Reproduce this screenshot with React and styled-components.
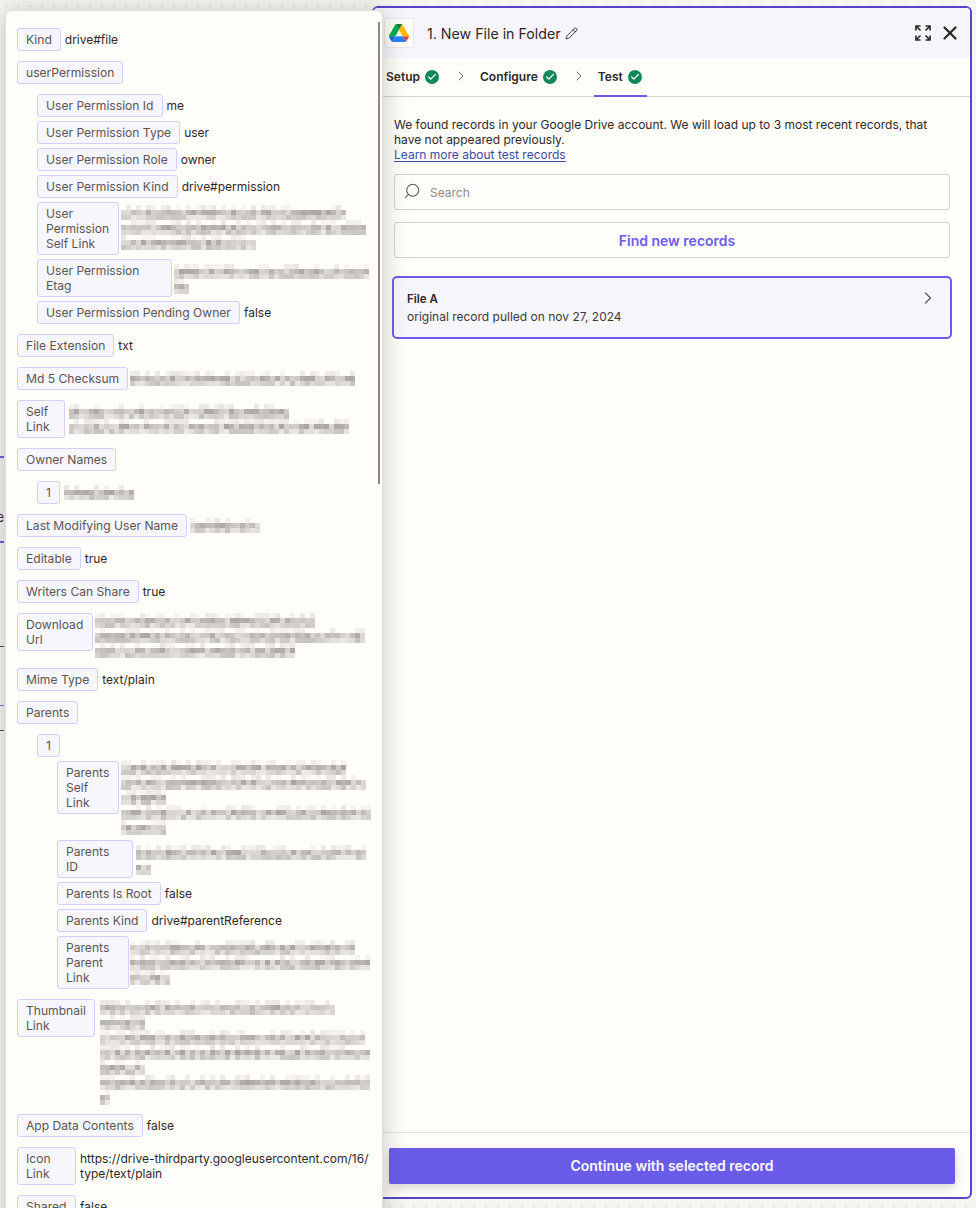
import React from "react";
import styled, { createGlobalStyle } from "styled-components";
import { Check, ChevronRight, Pencil, Search, X } from "lucide-react";

const GlobalStyle = createGlobalStyle`
  html, body {
    margin: 0;
    padding: 0;
    height: 1208px;
    overflow: hidden;
  }
  body {
    font-family: Inter, "Liberation Sans", sans-serif;
    font-size: 12px;
    line-height: 15px;
    color: #2d2926;
  }
  * {
    box-sizing: border-box;
  }
`;

const Page = styled.div`
  position: relative;
  width: 976px;
  height: 1208px;
  padding: 6px 4px 9px 372px;
  overflow: hidden;
  background-color: #f7f5f1;
  background-image: radial-gradient(#e4e1da 1px, transparent 1px);
  background-size: 12px 12px;
`;

/* ---------- zap canvas peeking out behind the popover ---------- */

const CanvasNode = styled.div`
  position: absolute;
  top: 456px;
  left: -40px;
  width: 44px;
  height: 87px;
  padding: 52px 0 0;
  text-align: right;
  font-size: 13px;
  line-height: 15px;
  background: #f3f2f8;
  border-top: 2px solid #6a5ce8;
  border-bottom: 2px solid #6a5ce8;
`;

const CanvasSpeck = styled.span`
  position: absolute;
  top: ${(p) => p.$top}px;
  left: 0;
  width: 4px;
  height: 1px;
  background: ${(p) => p.$color};
`;

/* ---------- right panel ---------- */

const Panel = styled.section`
  display: flex;
  flex-direction: column;
  height: 100%;
  background: #fffdf9;
  border: 2px solid #5445c9;
  border-radius: 6px;
  overflow: hidden;
`;

const Header = styled.header`
  display: flex;
  align-items: center;
  flex: none;
  height: 50px;
  padding: 0 9px 0 10px;
  background: #f6f5fc;
`;

const AppIcon = styled.div`
  display: flex;
  align-items: center;
  justify-content: center;
  flex: none;
  width: 30px;
  height: 30px;
  background: #fffdf9;
  border: 1px solid #ebe8e2;
  border-radius: 3px;
`;

const Title = styled.h1`
  margin: 1px 0 0 13px;
  font-size: 14.2px;
  line-height: 20px;
  font-weight: 400;
  color: #2d2926;
`;

const EditIcon = styled(Pencil)`
  margin-left: 4px;
  color: #2d2926;
`;

const HeaderActions = styled.div`
  display: flex;
  align-items: center;
  gap: 8px;
  margin-left: auto;
  color: #2d2926;
`;

const Tabs = styled.nav`
  display: flex;
  align-items: stretch;
  flex: none;
  height: 39px;
  padding: 0 12px;
  border-bottom: 1px solid #d8d5ce;
`;

const Tab = styled.div`
  display: flex;
  align-items: center;
  gap: 5px;
  margin-bottom: -1px;
  padding: 0 ${(p) => (p.$active ? "5px" : "0")} 0 ${(p) => (p.$active ? "4px" : "0")};
  font-size: 12px;
  font-weight: 600;
  color: #2d2926;
  border-bottom: 2px solid ${(p) => (p.$active ? "#6a5ce8" : "transparent")};
`;

const TabCheck = styled.span`
  display: flex;
  align-items: center;
  justify-content: center;
  width: 14px;
  height: 14px;
  border-radius: 50%;
  background: #12875a;
  color: #fffdf9;
`;

const TabArrow = styled(ChevronRight)`
  align-self: center;
  margin: -3px ${(p) => p.$after}px 0 ${(p) => p.$before}px;
  color: #6e6864;
`;

const Body = styled.div`
  display: flex;
  flex-direction: column;
  flex: 1;
  min-height: 0;
  padding: 20px 20px 0 20px;
`;

const Intro = styled.p`
  margin: 0;
  font-size: 12px;
  line-height: 15.2px;
  color: #2d2926;
`;

const TestLink = styled.a`
  color: #3a4aa8;
  text-decoration: underline;
  text-underline-offset: 2px;
`;

const SearchBox = styled.div`
  display: flex;
  align-items: center;
  gap: 9px;
  height: 36px;
  margin-top: 11px;
  padding: 1px 8px 0;
  border: 1px solid #d6d3cd;
  border-radius: 3px;
  color: #8f8a85;
  font-size: 12px;
`;

const SearchIcon = styled(Search)`
  margin-top: -2px;
  color: #5e5955;
  transform: scaleX(-1);
`;

const FindButton = styled.button`
  height: 36px;
  margin-top: 12px;
  padding: 2px 0 0 10px;
  background: transparent;
  border: 1px solid #d6d3cd;
  border-radius: 3px;
  color: #6a5ce8;
  font: 600 14px/15px Inter, "Liberation Sans", sans-serif;
`;

const RecordCard = styled.div`
  display: flex;
  align-items: center;
  justify-content: space-between;
  height: 63px;
  margin: 18px -2px 0;
  padding: 1px 12px 0 13px;
  background: #f7f6fd;
  border: 2px solid #6a5ce8;
  border-radius: 5px;
`;

const RecordName = styled.div`
  font-size: 11.5px;
  line-height: 18px;
  font-weight: 600;
`;

const RecordMeta = styled.div`
  font-size: 12px;
  line-height: 18px;
  color: #3d3835;
`;

const RecordArrow = styled(ChevronRight)`
  margin-bottom: 19px;
  color: #5e5955;
`;

const Footer = styled.footer`
  flex: none;
  height: 65px;
  padding: 15px 15px 0;
  border-top: 1px solid #e8e5df;
`;

const ContinueButton = styled.button`
  width: 100%;
  height: 36px;
  padding: 0 0 2px;
  background: #6a5ce8;
  border: none;
  border-radius: 2px;
  color: #fbfaff;
  font: 600 14px/15px Inter, "Liberation Sans", sans-serif;
  box-shadow: 0 4px 10px rgba(60, 55, 50, 0.18);
`;

/* ---------- floating data popover ---------- */

const Popover = styled.aside`
  position: absolute;
  top: 10px;
  left: 5px;
  width: 378px;
  height: 1240px;
  padding: 17px 12px 0 11px;
  background: #fffdf9;
  border: 1px solid #e2dfd8;
  border-radius: 6px;
  box-shadow: 0 2px 24px rgba(70, 65, 60, 0.3);
`;

const ScrollThumb = styled.div`
  position: absolute;
  top: 11px;
  right: 2px;
  width: 2px;
  height: 462px;
  background: #8d8884;
`;

const Tree = styled.div`
  display: flex;
  flex-direction: column;
  gap: ${(p) => (p.$nested ? "4px" : "10px")};
  margin-left: ${(p) => (p.$nested ? "20px" : "0")};
`;

const Group = styled.div`
  display: flex;
  flex-direction: column;
  gap: ${(p) => p.$gap || "10px"};
`;

const Row = styled.div`
  display: flex;
  align-items: flex-start;
  gap: 4px;
`;

const Key = styled.span`
  flex: none;
  width: ${(p) => p.$w || "auto"};
  padding: 3px 8px;
  font-size: 12.1px;
  line-height: 15px;
  color: #5b5552;
  background: #f7f6fd;
  border: 1px solid #d2d0fa;
  border-radius: 3px;
`;

const Value = styled.span`
  min-width: 0;
  padding: 4px 0;
  font-size: 12px;
  line-height: 15px;
  color: #2d2926;
  white-space: nowrap;
`;

const Mosaic = styled.svg`
  display: block;
  flex: none;
  margin-top: ${(p) => p.$top || 0}px;
  margin-left: ${(p) => p.$left || 0}px;
  margin-bottom: ${(p) => -(p.$top || 0)}px;
`;

// pixelated redaction: one entry per line of hidden text, width in px
function Redacted({ lines, seed = 7, top, left }) {
  const cell = 5;
  let n = seed * 9301 + 49297;
  const next = () => {
    n = (n * 9301 + 49297) % 233280;
    return n / 233280;
  };
  const width = Math.max(...lines);
  const cells = [];
  lines.forEach((w, li) => {
    const count = Math.round(w / cell);
    for (let i = 0; i < count; i++) {
      if (next() > 0.45) cells.push([i, li * 3, 232 + next() * 16]);
      cells.push([i, li * 3 + 1, 168 + next() * 55]);
      cells.push([i, li * 3 + 2, 195 + next() * 40]);
    }
  });
  return (
    <Mosaic $top={top} $left={left} width={width} height={lines.length * 15} shapeRendering="crispEdges">
      {cells.map(([x, y, g], i) => {
        const c = Math.round(g);
        return (
          <rect key={i} x={x * cell} y={y * cell} width={cell} height={cell} fill={`rgb(${c},${c - 3},${c - 6})`} />
        );
      })}
    </Mosaic>
  );
}

const DriveLogo = () => (
  <svg width="20" height="18" viewBox="0 0 87.3 78">
    <path d="M6.6 66.85l3.85 6.65c.8 1.4 1.95 2.5 3.3 3.3L27.5 53H0c0 1.55.4 3.1 1.2 4.5z" fill="#0066da" />
    <path d="M43.65 25L29.9 1.2c-1.35.8-2.5 1.9-3.3 3.3L1.2 48.5C.4 49.9 0 51.45 0 53h27.5z" fill="#00ac47" />
    <path d="M73.55 76.8c1.35-.8 2.5-1.9 3.3-3.3l1.6-2.75L86.1 57.5c.8-1.4 1.2-2.95 1.2-4.5H59.8l5.85 11.5z" fill="#ea4335" />
    <path d="M43.65 25L57.4 1.2C56.05.4 54.5 0 52.9 0H34.4c-1.6 0-3.15.45-4.5 1.2z" fill="#00832d" />
    <path d="M59.8 53H27.5L13.75 76.8c1.35.8 2.9 1.2 4.5 1.2h50.8c1.6 0 3.15-.45 4.5-1.2z" fill="#2684fc" />
    <path d="M73.4 26.5L60.7 4.5c-.8-1.4-1.95-2.5-3.3-3.3L43.65 25 59.8 53h27.45c0-1.55-.4-3.1-1.2-4.5z" fill="#ffba00" />
  </svg>
);

const ExpandIcon = () => (
  <svg width="16" height="16" viewBox="0 0 16 16" fill="none" stroke="currentColor" strokeWidth="1.7">
    <path d="M1 5.5V1h4.5M1 1l4.5 4.5" />
    <path d="M15 5.5V1h-4.5M15 1l-4.5 4.5" />
    <path d="M1 10.5V15h4.5M1 15l4.5-4.5" />
    <path d="M15 10.5V15h-4.5M15 15l-4.5-4.5" />
  </svg>
);

const StepDone = () => (
  <TabCheck>
    <Check size={10} strokeWidth={3} />
  </TabCheck>
);

export default function App() {
  return (
    <Page>
      <GlobalStyle />
      <CanvasNode>e</CanvasNode>
      <CanvasSpeck $top={646} $color="#4a4642" />
      <CanvasSpeck $top={705} $color="#6a7ad0" />
      <CanvasSpeck $top={730} $color="#4a4642" />
      <Panel>
        <Header>
          <AppIcon>
            <DriveLogo />
          </AppIcon>
          <Title>1. New File in Folder</Title>
          <EditIcon size={13} strokeWidth={1.7} />
          <HeaderActions>
            <ExpandIcon />
            <X size={22} strokeWidth={2.5} />
          </HeaderActions>
        </Header>
        <Tabs>
          <Tab>
            Setup
            <StepDone />
          </Tab>
          <TabArrow size={16} strokeWidth={1.5} $before={14} $after={11} />
          <Tab>
            Configure
            <StepDone />
          </Tab>
          <TabArrow size={16} strokeWidth={1.5} $before={14} $after={7} />
          <Tab $active>
            Test
            <StepDone />
          </Tab>
        </Tabs>
        <Body>
          <Intro>
            We found records in your Google Drive account. We will load up to 3 most recent records, that have not
            appeared previously.
            <br />
            <TestLink>Learn more about test records</TestLink>
          </Intro>
          <SearchBox>
            <SearchIcon size={18} strokeWidth={1.4} />
            Search
          </SearchBox>
          <FindButton type="button">Find new records</FindButton>
          <RecordCard>
            <div>
              <RecordName>File A</RecordName>
              <RecordMeta>original record pulled on nov 27, 2024</RecordMeta>
            </div>
            <RecordArrow size={20} strokeWidth={1.5} />
          </RecordCard>
        </Body>
        <Footer>
          <ContinueButton type="button">Continue with selected record</ContinueButton>
        </Footer>
      </Panel>

      <Popover>
        <ScrollThumb />
        <Tree>
          <Row>
            <Key>Kind</Key>
            <Value>drive#file</Value>
          </Row>
          <Group>
            <Row>
              <Key>userPermission</Key>
            </Row>
            <Tree $nested>
              <Row>
                <Key>User Permission Id</Key>
                <Value>me</Value>
              </Row>
              <Row>
                <Key>User Permission Type</Key>
                <Value>user</Value>
              </Row>
              <Row>
                <Key>User Permission Role</Key>
                <Value>owner</Value>
              </Row>
              <Row>
                <Key>User Permission Kind</Key>
                <Value>drive#permission</Value>
              </Row>
              <Row>
                <Key $w="82px">User Permission Self Link</Key>
                <Redacted lines={[225, 245, 135]} seed={3} top={3} left={-2} />
              </Row>
              <Row>
                <Key $w="135px">User Permission Etag</Key>
                <Redacted lines={[195, 15]} seed={5} top={5} left={-2} />
              </Row>
              <Row>
                <Key>User Permission Pending Owner</Key>
                <Value>false</Value>
              </Row>
            </Tree>
          </Group>
          <Row>
            <Key>File Extension</Key>
            <Value>txt</Value>
          </Row>
          <Row>
            <Key>Md 5 Checksum</Key>
            <Redacted lines={[225]} seed={11} top={4} left={-2} />
          </Row>
          <Row>
            <Key $w="48px">Self Link</Key>
            <Redacted lines={[220, 280]} seed={13} top={4} />
          </Row>
          <Group>
            <Row>
              <Key>Owner Names</Key>
            </Row>
            <Tree $nested>
              <Row>
                <Key>1</Key>
                <Redacted lines={[70]} seed={17} top={4} />
              </Row>
            </Tree>
          </Group>
          <Row>
            <Key>Last Modifying User Name</Key>
            <Redacted lines={[70]} seed={19} top={4} left={-1} />
          </Row>
          <Row>
            <Key>Editable</Key>
            <Value>true</Value>
          </Row>
          <Row>
            <Key>Writers Can Share</Key>
            <Value>true</Value>
          </Row>
          <Row>
            <Key $w="76px">Download Url</Key>
            <Redacted lines={[220, 270, 200]} seed={23} left={-2} />
          </Row>
          <Row>
            <Key>Mime Type</Key>
            <Value>text/plain</Value>
          </Row>
          <Group>
            <Row>
              <Key>Parents</Key>
            </Row>
            <Tree $nested>
              <Group $gap="4px">
                <Row>
                  <Key>1</Key>
                </Row>
                <Tree $nested>
                  <Row>
                    <Key $w="62px">Parents Self Link</Key>
                    <Redacted lines={[225, 245, 45, 250, 45]} seed={29} top={-1} left={-2} />
                  </Row>
                  <Row>
                    <Key $w="76px">Parents ID</Key>
                    <Redacted lines={[230, 15]} seed={31} top={5} left={-1} />
                  </Row>
                  <Row>
                    <Key>Parents Is Root</Key>
                    <Value>false</Value>
                  </Row>
                  <Row>
                    <Key>Parents Kind</Key>
                    <Value>drive#parentReference</Value>
                  </Row>
                  <Row>
                    <Key $w="72px">Parents Parent Link</Key>
                    <Redacted lines={[225, 240, 40]} seed={37} top={4} left={-3} />
                  </Row>
                </Tree>
              </Group>
            </Tree>
          </Group>
          <Row>
            <Key $w="78px">Thumbnail Link</Key>
            <Redacted lines={[235, 45, 265, 270, 45, 270, 10]} seed={41} top={1} left={1} />
          </Row>
          <Row>
            <Key>App Data Contents</Key>
            <Value>false</Value>
          </Row>
          <Row>
            <Key $w="59px">Icon Link</Key>
            <Value>
              https://drive-thirdparty.googleusercontent.com/16/
              <br />
              type/text/plain
            </Value>
          </Row>
          <Row>
            <Key $w="59px">Shared</Key>
            <Value>false</Value>
          </Row>
        </Tree>
      </Popover>
    </Page>
  );
}
